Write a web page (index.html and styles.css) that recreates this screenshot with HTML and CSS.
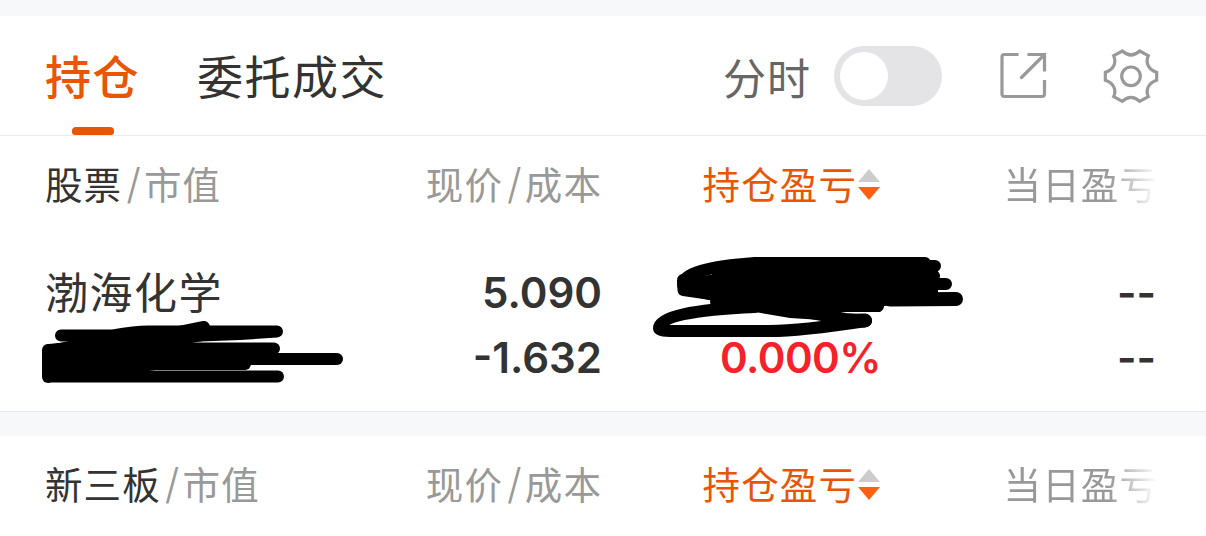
FILE: index.html
```html
<!DOCTYPE html>
<html lang="zh-CN">
<head>
    <meta charset="UTF-8">
    <meta name="viewport" content="width=device-width, initial-scale=1.0">
    <title>持仓</title>
    <link rel="stylesheet" href="styles.css">
</head>
<body>
    <div class="toolbar">
        <div class="tabs">
            <div class="tab active">持仓</div>
            <div class="tab">委托成交</div>
        </div>
        <div class="tools">
            <span class="switch-label">分时</span>
            <div class="switch"></div>
            <svg class="icon-share" width="48" height="48" viewBox="0 0 48 48">
                <path d="M18.500 2.500H4.500Q2 2.500 2 5V42Q2 44.500 4.500 44.500H42Q44.500 44.500 44.500 42V28"/>
                <path d="M27.500 2.500H44.500V19.500"/>
                <path d="M44 3L21.500 25.500" stroke-linecap="round"/>
            </svg>
            <svg class="icon-gear" width="56" height="56" viewBox="0 0 168 168">
                <path d="M58 9Q84 33 110 9L136 23C126 46 138 66 161 73V97C138 104 126 124 136 146L110 160Q84 136 58 160L32 146C42 124 30 104 7 97V73C30 66 42 46 32 23Z"/>
                <circle cx="84" cy="85" r="28"/>
            </svg>
        </div>
    </div>

    <div class="section">
        <div class="grid head">
            <div><span class="dark">股票</span><i>/</i>市值</div>
            <div class="right">现价<i>/</i>成本</div>
            <div class="right sort">持仓盈亏<span class="arrows"></span></div>
            <div class="right fade">当日盈亏</div>
        </div>
        <div class="grid stock">
            <div class="name">渤海化学</div>
            <div class="right num">5.090<br>-1.632</div>
            <div class="right num red"><br>0.000%</div>
            <div class="right num">--<br>--</div>
            <!-- hidden amounts -->
            <svg class="scribble" width="1206" height="175" viewBox="0 236 1206 175">
                <path class="blot" d="M60 343L90 336H230L192 343V345H272V360H248V368H150L135 372H48V345Z"/>
                <path d="M61 335.500H113Q135 331.500 148 331.500H277L240 334L200 335.500H150L80 347"/>
                <path d="M150 338L204 327"/>
                <path d="M49 350L80 347L110 348.500H274"/>
                <path d="M48 350V377"/>
                <path d="M50 359H337"/>
                <path d="M50 364H245"/>
                <path d="M50 371L130 368L160 363"/>
                <path d="M49 376.500H278"/>
                <path class="blot" d="M712 272L760 258H926L938 272V303L884 306L880 312H842L822 320L790 318L755 312L712 308Z"/>
                <path d="M925 263H755Q684 268 683 284Q684 291 696 291L718 296"/>
                <path d="M683 280L683.500 290L718 295"/>
                <path d="M690 283L730 279"/>
                <path d="M686 286L720 290"/>
                <path d="M716 302L740 306"/>
                <path d="M920 266H935M920 274L934 276M920 284H946"/>
                <path d="M890 299.500L956 299" stroke-width="14"/>
                <path d="M860 305L878 306"/>
                <path d="M755 307Q660 311 659 328Q659 331 670 331H770Q800 331 866 321L845 319L800 311"/>
                <path d="M835 321L865 320.500" stroke-width="14"/>
            </svg>
        </div>
    </div>

    <div class="section">
        <div class="grid head">
            <div><span class="dark">新三板</span><i>/</i>市值</div>
            <div class="right">现价<i>/</i>成本</div>
            <div class="right sort">持仓盈亏<span class="arrows"></span></div>
            <div class="right fade">当日盈亏</div>
        </div>
    </div>
</body>
</html>
```
FILE: styles.css
```css
* {
    margin: 0;
    padding: 0;
    box-sizing: border-box;
}

body {
    width: 1206px;
    height: 536px;
    padding-top: 16px;
    overflow: hidden;
    background: #f6f8fa;
    color: #333;
    font-family: Inter, "Noto Sans CJK SC", sans-serif;
}

.toolbar {
    display: flex;
    justify-content: space-between;
    height: 120px;
    padding: 0 47px 0 45px;
    background: #fff;
    border-bottom: 1px solid #ebebeb;
}

.tabs {
    display: flex;
    gap: 57px;
}

.tab {
    font-size: 46px;
    letter-spacing: 1.5px;
    line-height: 122px;
}

.tab.active {
    display: flex;
    flex-direction: column;
    justify-content: space-between;
    align-items: center;
    color: #ea5504;
    font-weight: 500;
    height: 119px;
}

.tab.active::after {
    content: "";
    width: 42px;
    height: 8px;
    margin-top: -11px;
    flex-shrink: 0;
    background: #ea5504;
    border-radius: 4px 4px 3px 3px;
}

.tools {
    display: flex;
    align-items: center;
}

.switch-label {
    font-size: 43px;
    letter-spacing: 1px;
    color: #666;
    margin-right: 23px;
}

.switch {
    width: 108px;
    height: 60px;
    padding: 6px;
    border-radius: 30px;
    background: #e4e4e6;
}

.switch::before {
    content: "";
    display: block;
    width: 48px;
    height: 48px;
    border-radius: 50%;
    background: #fff;
}

.tools svg {
    fill: none;
    stroke: #999;
    stroke-width: 3.2;
}

.icon-share {
    margin-left: 58px;
}

.tools .icon-gear {
    margin-left: 55px;
    stroke-width: 9.5;
}

.section {
    background: #fff;
    border-bottom: 1px solid #e8eaed;
    margin-bottom: 24px;
}

.grid {
    display: grid;
    grid-template-columns: 300px 257px 279px 275px;
    padding-left: 45px;
}

.head {
    height: 100px;
    padding-top: 1px;
    line-height: 92px;
    font-family: "Noto Sans CJK SC", sans-serif;
    font-size: 37.5px;
    letter-spacing: 1.1px;
    color: #999;
    white-space: nowrap;
}

.head i {
    font-family: Inter, sans-serif;
    font-size: 42px;
    font-style: normal;
    font-weight: 300;
    line-height: 1;
    margin: 0 2px 0 4px;
}

.dark {
    color: #333;
}

.right {
    text-align: right;
}

.sort {
    display: flex;
    align-items: flex-start;
    justify-content: flex-end;
    padding-right: 1px;
    color: #ea5504;
}

.arrows {
    margin: 32px 0 0 1px;
}

.arrows::before,
.arrows::after {
    content: "";
    display: block;
    border: 11px solid transparent;
    border-top-width: 0;
    border-bottom: 13px solid #ccc;
}

.arrows::after {
    margin-top: 5px;
    border-top: 13px solid #ff6010;
    border-bottom-width: 0;
}

.fade {
    margin-right: -2px;
    -webkit-mask-image: linear-gradient(to left, transparent, #000 50px);
    mask-image: linear-gradient(to left, transparent, #000 50px);
}

.stock {
    position: relative;
    height: 175px;
    padding-top: 24px;
}

.name {
    font-size: 43px;
    letter-spacing: 1.5px;
    line-height: 66px;
}

.num {
    font-size: 42px;
    font-weight: 600;
    line-height: 65px;
}

.red {
    color: #f5222a;
    letter-spacing: -0.5px;
}

.scribble {
    position: absolute;
    left: 0;
    top: 0;
    fill: none;
    stroke: #000;
    stroke-width: 12;
    stroke-linecap: round;
    stroke-linejoin: round;
}

.blot {
    fill: #000;
    stroke: none;
}
```
